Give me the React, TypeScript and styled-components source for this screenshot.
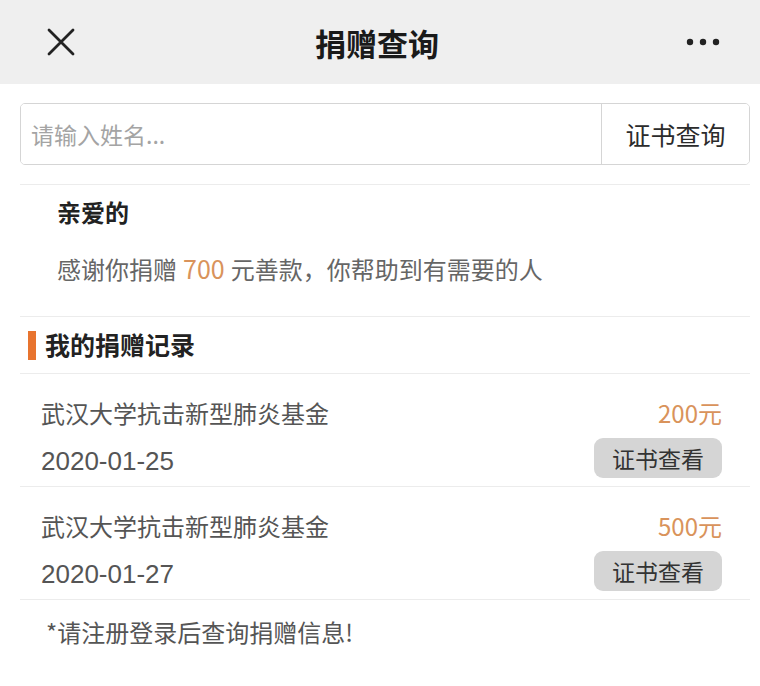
import React from 'react';
import styled, { createGlobalStyle } from 'styled-components';

const GlobalStyle = createGlobalStyle`
  html, body {
    margin: 0;
    padding: 0;
    background: #ffffff;
    font-family: "Noto Sans CJK SC", "Noto Sans", sans-serif;
  }
  * { box-sizing: border-box; }
`;

const Page = styled.div`
  width: 760px;
  min-height: 686px;
  background: #ffffff;
`;

const NavBar = styled.div`
  height: 84px;
  background: #efefef;
  display: flex;
  align-items: center;
  justify-content: space-between;
  padding: 0 40px 0 44px;
`;

const NavTitle = styled.div`
  font-size: 31px;
  font-weight: 700;
  color: #1a1a1a;
  margin-right: 10px;
`;

const IconBox = styled.div`
  width: 34px;
  height: 34px;
  display: flex;
  align-items: center;
  justify-content: center;
`;

const Content = styled.div`
  padding: 19px 10px 0 20px;
`;

const SearchBox = styled.div`
  display: flex;
  height: 62px;
  border: 1.5px solid #d5d5d5;
  border-radius: 5px;
  overflow: hidden;
`;

const SearchInput = styled.input`
  flex: 1;
  border: none;
  outline: none;
  padding: 0 10px;
  font-family: inherit;
  font-size: 23px;
  color: #333;
  background: #fff;
  &::placeholder {
    color: #a4a4a4;
  }
`;

const SearchButton = styled.button`
  width: 148px;
  border: none;
  border-left: 1.5px solid #d5d5d5;
  background: #fff;
  font-family: inherit;
  font-size: 25px;
  color: #2b2b2b;
  padding: 0;
`;

const Section = styled.div`
  border-top: 1.5px solid #ececec;
  margin-top: 19px;
`;

const Greeting = styled.div`
  padding: 10px 0 0 37px;
  height: 131px;
`;

const GreetTitle = styled.div`
  font-size: 24px;
  font-weight: 700;
  color: #222;
  line-height: 34px;
`;

const GreetText = styled.div`
  margin-top: 22px;
  font-size: 24px;
  color: #666;
  line-height: 34px;
`;

const Amount = styled.span`
  color: #d9935b;
  margin: 0 6px;
  font-size: 25px;
`;

const SectionHead = styled.div`
  border-top: 1.5px solid #ececec;
  border-bottom: 1.5px solid #ececec;
  height: 58px;
  display: flex;
  align-items: center;
  gap: 9px;
  padding: 0 0 3px 8px;
`;

const HeadBar = styled.div`
  width: 8px;
  height: 29px;
  margin-top: 3px;
  background: #e8742f;
`;

const HeadTitle = styled.div`
  font-size: 25px;
  font-weight: 700;
  color: #222;
`;

const Record = styled.div`
  height: 113px;
  border-bottom: 1.5px solid #ececec;
  padding: 16px 28px 0 21px;
  display: grid;
  grid-template-columns: 1fr auto;
  grid-template-rows: 44px 44px;
  align-items: center;
`;

const RecordName = styled.div`
  font-size: 24px;
  color: #555;
`;

const RecordMoney = styled.div`
  font-size: 24px;
  color: #d9935b;
  text-align: right;
`;

const RecordDate = styled.div`
  font-size: 26px;
  color: #555;
  font-family: "Liberation Sans", "Noto Sans CJK SC", sans-serif;
  margin-top: 11px;
`;

const CertButton = styled.button`
  justify-self: end;
  width: 128px;
  height: 40px;
  margin-top: 4px;
  border: none;
  border-radius: 9px;
  background: #d5d5d5;
  font-family: inherit;
  font-size: 23px;
  color: #333;
  padding: 0;
`;

const Notice = styled.div`
  padding: 14px 0 0 26px;
  font-size: 24px;
  color: #555;
`;

const records = [
  { name: '武汉大学抗击新型肺炎基金', money: '200元', date: '2020-01-25' },
  { name: '武汉大学抗击新型肺炎基金', money: '500元', date: '2020-01-27' },
];

const App: React.FC = () => (
  <Page>
    <GlobalStyle />
    <NavBar>
      <IconBox>
        <svg width="28" height="28" viewBox="0 0 28 28">
          <path d="M2 2 L26 26 M26 2 L2 26" stroke="#222" strokeWidth="2.8" strokeLinecap="round" />
        </svg>
      </IconBox>
      <NavTitle>捐赠查询</NavTitle>
      <IconBox>
        <svg width="34" height="8" viewBox="0 0 34 8">
          <circle cx="4" cy="4" r="3.2" fill="#222" />
          <circle cx="17" cy="4" r="3.2" fill="#222" />
          <circle cx="30" cy="4" r="3.2" fill="#222" />
        </svg>
      </IconBox>
    </NavBar>
    <Content>
      <SearchBox>
        <SearchInput placeholder="请输入姓名..." />
        <SearchButton>证书查询</SearchButton>
      </SearchBox>
      <Section>
        <Greeting>
          <GreetTitle>亲爱的</GreetTitle>
          <GreetText>
            感谢你捐赠<Amount>700</Amount>元善款，你帮助到有需要的人
          </GreetText>
        </Greeting>
      </Section>
      <SectionHead>
        <HeadBar />
        <HeadTitle>我的捐赠记录</HeadTitle>
      </SectionHead>
      {records.map((r, i) => (
        <Record key={i}>
          <RecordName>{r.name}</RecordName>
          <RecordMoney>{r.money}</RecordMoney>
          <RecordDate>{r.date}</RecordDate>
          <CertButton>证书查看</CertButton>
        </Record>
      ))}
      <Notice>*请注册登录后查询捐赠信息!</Notice>
    </Content>
  </Page>
);

export default App;
